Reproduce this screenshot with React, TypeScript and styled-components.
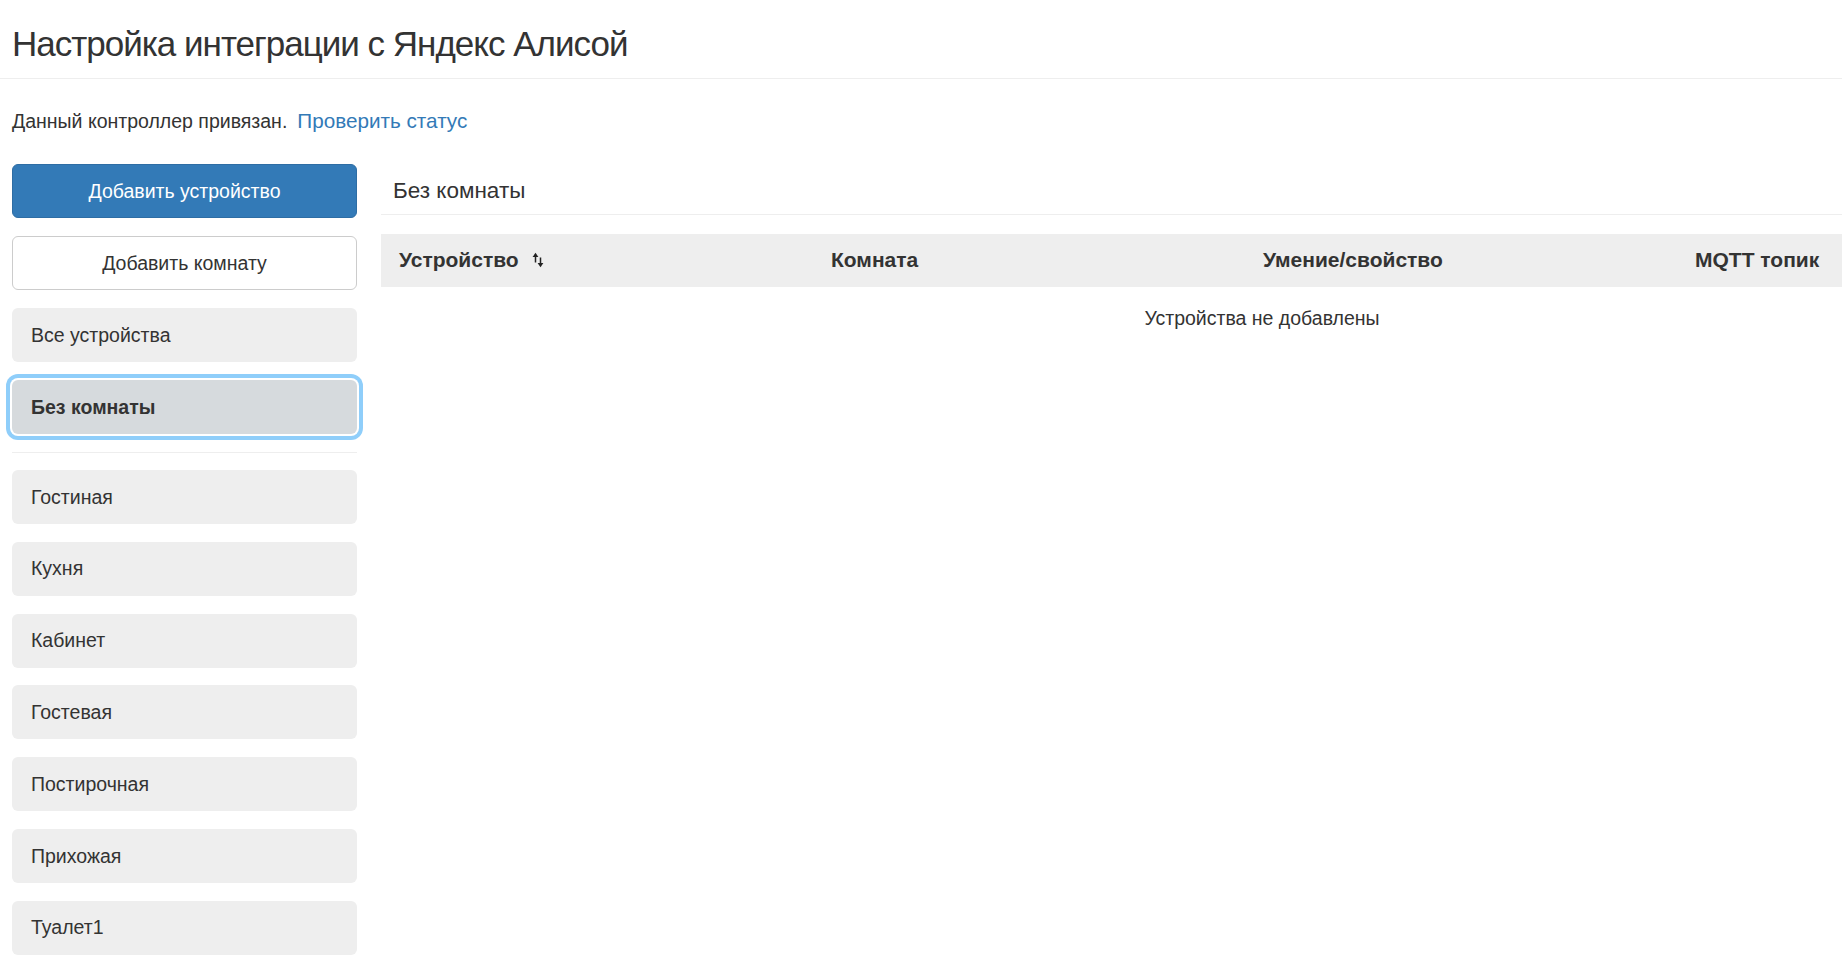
import React from "react";
import styled, { createGlobalStyle } from "styled-components";

const GlobalStyle = createGlobalStyle`
  html, body {
    margin: 0;
    padding: 0;
    overflow: hidden;
    background: #ffffff;
  }
  body {
    font-family: "Liberation Sans", Arial, Helvetica, sans-serif;
    color: #333333;
    font-size: 19.5px;
    line-height: 28.6px;
  }
  * { box-sizing: border-box; }
`;

const Page = styled.div`
  padding-left: 12px;
  width: 1842px;
`;

const Title = styled.h1`
  margin: 0 0 0 -12px;
  padding: 24.7px 0 14.9px 12px;
  font-size: 35px;
  letter-spacing: -1px;
  line-height: 1.1;
  font-weight: 400;
  color: #333;
  border-bottom: 1px solid #eeeeee;
`;

const Status = styled.p`
  margin: 28px 0 0 0;
  display: flex;
  align-items: baseline;
`;

const StatusLink = styled.a`
  color: #337ab7;
  text-decoration: none;
  font-size: 20.7px;
  margin-left: 10px;
  cursor: pointer;
`;

const Layout = styled.div`
  margin-top: 28.4px;
  display: grid;
  grid-template-columns: 345px minmax(0, 1fr);
  column-gap: 24px;
  align-items: start;
`;

const Sidebar = styled.nav`
  display: flex;
  flex-direction: column;
  gap: 18px;
`;

const RoomList = styled.div`
  display: flex;
  flex-direction: column;
  gap: 17.8px;
`;

const ActionButton = styled.button<{ $primary?: boolean }>`
  height: 54px;
  width: 100%;
  border-radius: 6px;
  font-family: inherit;
  font-size: 19.5px;
  font-weight: 400;
  cursor: pointer;
  text-align: center;
  background: ${(p) => (p.$primary ? "#337ab7" : "#ffffff")};
  color: ${(p) => (p.$primary ? "#ffffff" : "#333333")};
  border: 1px solid ${(p) => (p.$primary ? "#2e6da4" : "#cccccc")};
`;

const RoomItem = styled.button<{ $active?: boolean }>`
  height: 54px;
  width: 100%;
  border: none;
  border-radius: 6px;
  padding: 0 19px;
  display: flex;
  align-items: center;
  font-family: inherit;
  font-size: 19.5px;
  color: #333333;
  cursor: pointer;
  text-align: left;
  background: ${(p) => (p.$active ? "#d6dadd" : "#eeeeee")};
  font-weight: ${(p) => (p.$active ? 700 : 400)};
  box-shadow: ${(p) =>
    p.$active ? "0 0 0 2px #ffffff, 0 0 0 6px #8fcefa" : "none"};
`;

const Divider = styled.hr`
  margin: 0 0 -1px 0;
  border: none;
  border-top: 1px solid #eeeeee;
  height: 0;
`;

const Main = styled.section`
  min-width: 0;
`;

const SectionTitle = styled.h3`
  margin: 0;
  padding: 15px 0 10.2px 12px;
  font-size: 22.5px;
  line-height: 1.1;
  font-weight: 400;
  color: #333;
  border-bottom: 1px solid #eeeeee;
`;

const Table = styled.div`
  margin-top: 18.5px;
  width: 1728px;
`;

const HeadRow = styled.div`
  display: grid;
  grid-template-columns: repeat(4, 432px);
  background: #eeeeee;
`;

const HeadCell = styled.div`
  padding: 12.7px 18px;
  font-weight: 700;
  font-size: 21px;
  line-height: 28.6px;
  color: #333;
  display: flex;
  align-items: center;
  gap: 13px;
`;

const EmptyRow = styled.div`
  padding: 17px 0 17px 34px;
  text-align: center;
`;

const SortIcon = () => (
  <svg width="12" height="16" viewBox="0 0 12 16" aria-hidden="true">
    <polygon points="0.6,5 3.5,0.8 6.4,5" fill="#222" />
    <rect x="2.75" y="4" width="1.5" height="6.5" fill="#222" />
    <rect x="7.75" y="5.5" width="1.5" height="6.5" fill="#222" />
    <polygon points="5.6,11 8.5,15.2 11.4,11" fill="#222" />
  </svg>
);

const rooms = [
  "Гостиная",
  "Кухня",
  "Кабинет",
  "Гостевая",
  "Постирочная",
  "Прихожая",
  "Туалет1",
];

export default function App() {
  return (
    <Page>
      <GlobalStyle />
      <Title>Настройка интеграции с Яндекс Алисой</Title>
      <Status>
        Данный контроллер привязан.
        <StatusLink>Проверить статус</StatusLink>
      </Status>
      <Layout>
        <Sidebar>
          <ActionButton $primary>Добавить устройство</ActionButton>
          <ActionButton>Добавить комнату</ActionButton>
          <RoomItem>Все устройства</RoomItem>
          <RoomItem $active>Без комнаты</RoomItem>
          <Divider />
          <RoomList>
            {rooms.map((r) => (
              <RoomItem key={r}>{r}</RoomItem>
            ))}
          </RoomList>
        </Sidebar>
        <Main>
          <SectionTitle>Без комнаты</SectionTitle>
          <Table>
            <HeadRow>
              <HeadCell>
                Устройство
                <SortIcon />
              </HeadCell>
              <HeadCell>Комната</HeadCell>
              <HeadCell>Умение/свойство</HeadCell>
              <HeadCell>MQTT топик</HeadCell>
            </HeadRow>
            <EmptyRow>Устройства не добавлены</EmptyRow>
          </Table>
        </Main>
      </Layout>
    </Page>
  );
}
